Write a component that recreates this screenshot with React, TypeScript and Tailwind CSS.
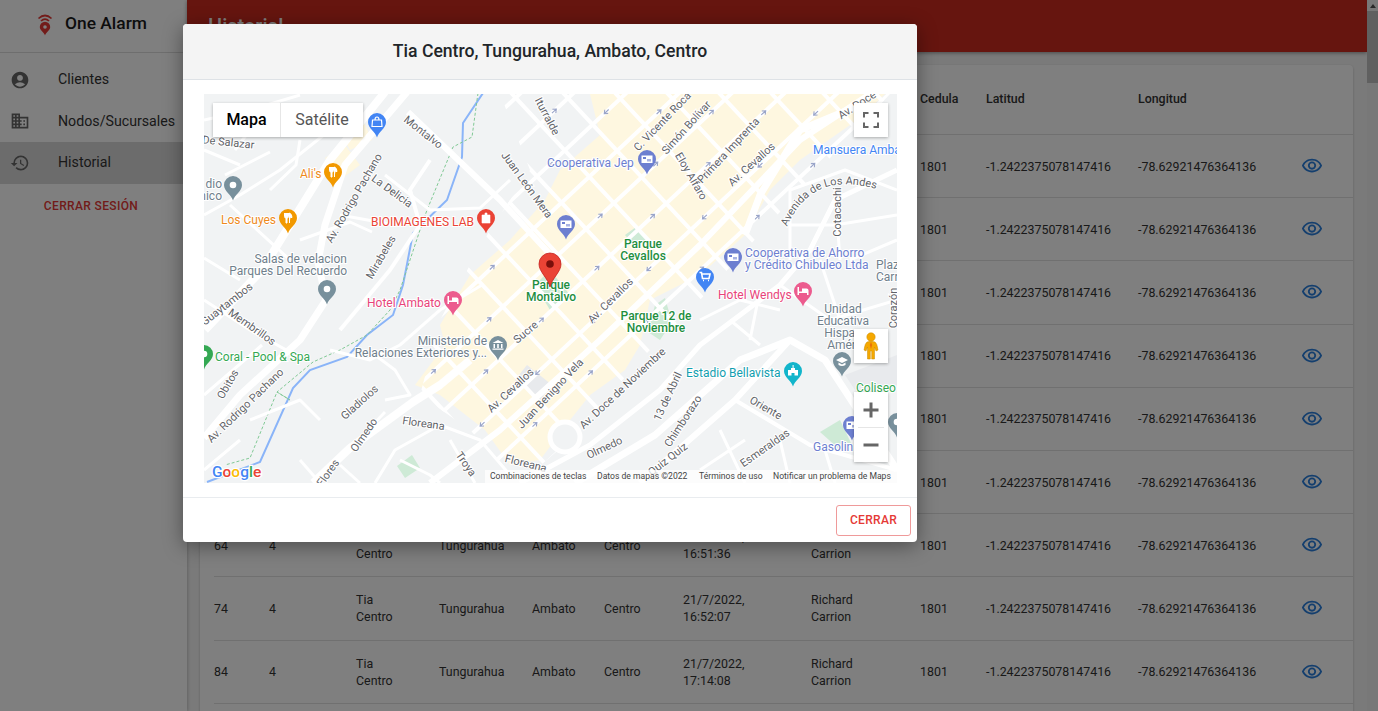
import { MdAccountCircle, MdDomain, MdHistory, MdOutlineVisibility } from "react-icons/md";

const rows = [
  ["4", "11:02:14"],
  ["14", "12:40:51"],
  ["24", "14:18:09"],
  ["34", "15:33:27"],
  ["44", "16:05:42"],
  ["54", "16:30:18"],
  ["64", "16:51:36"],
  ["74", "16:52:07"],
  ["84", "17:14:08"],
  ["94", "17:20:33"],
];

const cols = "grid grid-cols-[55px_87px_83px_93px_72px_79px_128px_109px_66px_152px_163px_1fr] items-center";

const menu = [
  { label: "Clientes", icon: MdAccountCircle, active: false },
  { label: "Nodos/Sucursales", icon: MdDomain, active: false },
  { label: "Historial", icon: MdHistory, active: true },
];

const YELLOW = "590,94 885,94 860,118 800,160 770,190 745,235 700,275 650,300 640,345 625,370 590,395 570,420 540,460 510,465 485,430 440,395 415,385 445,345 440,325 470,275 510,240 545,200 560,170 600,135";
const GRID = "500,94 890,94 800,190 700,300 640,360 570,440 520,483 470,430 420,395 440,320 470,265 490,230 530,170";

const roads: [string, number][] = [
  ["M407 92 L345 165 L325 225 L318 262 L326 300 L300 340 L240 395 L204 438", 7],
  ["M385 92 L330 160 L262 270 L205 330", 8],
  ["M204 395 L262 345 M204 300 L250 330 L290 352", 3],
  ["M204 120 L250 110 L300 95 M225 175 L270 152 M204 215 L240 195 L280 170 L330 130", 3],
  ["M230 205 L290 260 M204 258 L240 280 M300 240 L350 222 L372 232", 3],
  ["M250 130 L235 150 M300 140 L296 165 L270 190 M204 150 L240 165", 3],
  ["M408 112 L500 200 L560 265", 6],
  ["M340 215 L395 225 M385 175 L430 210 L480 208 L510 180", 3],
  ["M430 160 L410 190 L420 225 L390 270 L340 330", 4],
  ["M482 285 L440 310 L400 345 L370 360 L330 350", 3],
  ["M313 483 L350 448 L413 402 L440 385 L470 360", 8],
  ["M385 400 L410 395 L395 370 L375 355 M368 430 L385 412", 3],
  ["M375 483 L395 450 L440 425 L480 440 L510 475", 3],
  ["M340 465 L360 483 M300 460 L320 483 M450 440 L475 483", 3],
  ["M400 460 L430 475 L440 483 M204 470 L240 440 M250 420 L300 400 L320 420", 3],
  ["M520 483 L590 445 L660 390 L700 345 L780 285 L810 250 L835 200 L897 170", 5],
  ["M575 483 L655 435 L740 360 L790 340 L825 360 L897 470", 7],
  ["M640 483 L735 400 L790 340", 6],
  ["M735 400 L810 445 L897 470", 4],
  ["M745 483 L720 430 M790 483 L780 440 M700 470 L745 440 M835 483 L825 450", 3],
  ["M730 320 L760 345 M700 320 L740 300 L780 310 M760 290 L750 340", 3],
  ["M780 285 L830 320 L897 300 M850 260 L897 240 M820 260 L840 320", 3],
  ["M790 260 L790 190 L845 170 L897 190 M835 190 L840 260 M790 225 L835 225 L897 215", 3],
  ["M745 235 L760 195 L800 130 L860 105", 7],
  ["M430 483 L500 430 L600 340 L700 245 L800 140 L870 94", 6],
];

const streets: [string, number, number, number][] = [
  ["De Salazar", 228, 146, 6],
  ["Montalvo", 421, 135, 38],
  ["Iturralde", 544, 118, 62],
  ["Juan León Mera", 524, 187, 54],
  ["C. Vicente Roca", 665, 124, -46],
  ["Simón Bolívar", 689, 130, -48],
  ["Eloy Alfaro", 688, 178, 60],
  ["Primera Imprenta", 731, 153, -47],
  ["Av. Cevallos", 754, 167, -42],
  ["Av. Doce", 859, 108, -33],
  ["Cotacachi", 841, 212, -90],
  ["La Delicia", 390, 194, 36],
  ["Av. Rodrigo Pachano", 357, 200, -60],
  ["Mirabeles", 384, 259, -60],
  ["Guaytambos", 229, 307, -38],
  ["Membrillos", 250, 330, 35],
  ["Obitos", 231, 386, -60],
  ["Av. Rodrigo Pachano", 248, 408, -44],
  ["Gladiolos", 362, 405, -42],
  ["Olmedo", 367, 437, -55],
  ["Flores", 331, 475, -55],
  ["Floreana", 423, 427, 8],
  ["Troya", 463, 466, 55],
  ["Floreana", 525, 467, 14],
  ["Sucre", 528, 335, -40],
  ["Av. Cevallos", 513, 393, -43],
  ["Av. Cevallos", 613, 303, -45],
  ["Juan Benigno Vela", 553, 396, -47],
  ["Av. Doce de Noviembre", 625, 391, -43],
  ["13 de Abril", 671, 398, -65],
  ["Chimborazo", 686, 423, -57],
  ["Olmedo", 606, 451, -25],
  ["Quiz Quiz", 670, 462, -38],
  ["Oriente", 764, 411, 30],
  ["Esmeraldas", 767, 451, -35],
  ["Corazón", 897, 308, -90],
];

const pois: [string, number, number, string, "start" | "middle" | "end"][] = [
  ["Mansuera Amba", 813, 154, "#4285f4", "start"],
  ["Cooperativa Jep", 547, 167, "#6d7fd0", "start"],
  ["BIOIMAGENES LAB", 371, 226, "#ea4335", "start"],
  ["Ali's", 300, 178, "#ee8a1c", "start"],
  ["Los Cuyes", 221, 224, "#ee8a1c", "start"],
  ["Salas de velacion", 347, 263, "#70808c", "end"],
  ["Parques Del Recuerdo", 347, 275, "#70808c", "end"],
  ["dio", 222, 188, "#70808c", "end"],
  ["nico", 222, 200, "#70808c", "end"],
  ["Parque", 643, 248, "#1e8e3e", "middle"],
  ["Cevallos", 643, 260, "#1e8e3e", "middle"],
  ["Parque", 551, 289, "#1e8e3e", "middle"],
  ["Montalvo", 551, 301, "#1e8e3e", "middle"],
  ["Parque 12 de", 656, 320, "#1e8e3e", "middle"],
  ["Noviembre", 656, 332, "#1e8e3e", "middle"],
  ["Cooperativa de Ahorro", 745, 257, "#6d7fd0", "start"],
  ["y Crédito Chibuleo Ltda", 745, 269, "#6d7fd0", "start"],
  ["Plaz", 876, 269, "#70808c", "start"],
  ["Carr", 876, 281, "#70808c", "start"],
  ["Hotel Wendys", 718, 299, "#e8437a", "start"],
  ["Hotel Ambato", 367, 307, "#e8437a", "start"],
  ["Coral - Pool & Spa", 215, 361, "#34a853", "start"],
  ["Ministerio de", 487, 345, "#70808c", "end"],
  ["Relaciones Exteriores y...", 487, 357, "#70808c", "end"],
  ["Unidad", 843, 313, "#70808c", "middle"],
  ["Educativa", 843, 325, "#70808c", "middle"],
  ["Hispan", 843, 337, "#70808c", "middle"],
  ["Améri", 843, 349, "#70808c", "middle"],
  ["Estadio Bellavista", 686, 377, "#129eaf", "start"],
  ["Coliseo", 856, 392, "#34a853", "start"],
  ["Gasolin", 813, 451, "#6d7fd0", "start"],
];

// glyph: f = food, b = bag, c = card, o = dot, h = bed, p = plus, m = museum, s = school, k = stadium, t = cart
const pins: [number, number, string, string][] = [
  [377, 122, "#4285f4", "b"],
  [333, 172, "#f29900", "f"],
  [288, 218, "#f29900", "f"],
  [233, 185, "#78909c", "o"],
  [327, 289, "#78909c", "o"],
  [486, 218, "#ea4335", "p"],
  [647, 159, "#6d7fd0", "c"],
  [566, 224, "#6d7fd0", "c"],
  [733, 257, "#6d7fd0", "c"],
  [705, 277, "#4285f4", "t"],
  [803, 291, "#ec5b8e", "h"],
  [453, 300, "#ec5b8e", "h"],
  [204, 354, "#34a853", "o"],
  [498, 345, "#78909c", "m"],
  [842, 361, "#78909c", "s"],
  [793, 371, "#12b5cb", "k"],
  [852, 425, "#6d7fd0", "c"],
  [897, 422, "#78909c", "o"],
];

function Glyph({ kind }: { kind: string }) {
  if (kind === "f") return <path d="M-3.5 -5 V-1.5 Q-3.5 0 -2 0 V5 H-1 V0 Q0.5 0 0.5 -1.5 V-5 M1.5 5 V-5 Q4 -4 4 -0.5 H2.5" stroke="#fff" strokeWidth="1" fill="#fff" />;
  if (kind === "b") return <path d="M-4.5 -2 H4.5 L5 4.5 H-5 Z M-2 -2 Q-2 -5 0 -5 Q2 -5 2 -2" stroke="#fff" strokeWidth="1.2" fill="none" />;
  if (kind === "c") return <g><rect x="-5.5" y="-3.5" width="11" height="7.5" fill="#fff" /><rect x="-4" y="-2" width="3" height="2" fill="#6d7fd0" /><rect x="0" y="0" width="4" height="2.5" fill="#a9b3e3" /></g>;
  if (kind === "o") return <circle r="3.3" fill="#fff" />;
  if (kind === "h") return <path d="M-5.5 4 V-4 H-4 V0.5 H-1 V-2.5 H3.5 Q5.5 -2.5 5.5 -0.5 V4 H4 V2 H-4 V4 Z" fill="#fff" />;
  if (kind === "p") return <path d="M-4 -3 H4 V5 H-4 Z M-1 -5 H1 V-3 H-1 Z" fill="#fff" stroke="#fff" strokeWidth="0.6" />;
  if (kind === "m") return <path d="M-5.5 -2 L0 -5 L5.5 -2 Z M-4.5 -1 H-3 V3 H-4.5 Z M-0.8 -1 H0.8 V3 H-0.8 Z M3 -1 H4.5 V3 H3 Z M-5.5 3.5 H5.5 V4.7 H-5.5 Z" fill="#fff" />;
  if (kind === "s") return <path d="M-6 -1 L0 -4 L6 -1 L0 2 Z M-3.5 1.5 L0 3.4 L3.5 1.5 V4 Q0 6 -3.5 4 Z" fill="#fff" />;
  if (kind === "k") return <path d="M-5 4.5 V-1 H-2 V-3 H-0.4 V-6 H0.6 V-3 H2 V-1 H5 V4.5 H1.5 V2 H-1.5 V4.5 Z" fill="#fff" />;
  if (kind === "t") return <path d="M-5.5 -4.5 H-3.5 L-2.5 1.5 H4 L5 -3 H-3 M-2 3.5 h1 M3 3.5 h1" stroke="#fff" strokeWidth="1.6" fill="none" />;
  return null;
}

function MapDrawing() {
  const hLines = Array.from({ length: 21 }, (_, i) => -380 + i * 36);
  const vLines = Array.from({ length: 21 }, (_, i) => -388 + i * 38);
  const arrows = hLines.flatMap((y, i) =>
    vLines
      .filter((_, j) => (i + j) % 2 === 0)
      .map((x) => ({ x: x + 19, y, back: i % 4 === 0 }))
  );

  return (
    <svg viewBox="204 94 693 389" className="block h-full w-full font-['Roboto',sans-serif]">
      <defs>
        <clipPath id="grid-area">
          <polygon points={GRID} />
        </clipPath>
      </defs>
      <rect x="204" y="94" width="693" height="389" fill="#f1f3f4" />
      <polygon points={YELLOW} fill="#fef7e0" />
      <polygon points="340,132 362,118 372,140 350,150" fill="#fef7e0" />
      <polygon points="325,158 345,145 360,165 340,180" fill="#fef7e0" />
      <polygon points="527,365 552,385 540,400 515,380" fill="#e8eaed" />
      <polygon points="845,375 897,355 897,385 865,405" fill="#e8eaed" />
      <polygon points="648,332 655,305 665,298 672,322 660,340" fill="#ceead6" />
      <polygon points="535,285 550,270 570,295 550,310" fill="#ceead6" />
      <polygon points="625,235 636,227 647,240 635,247" fill="#ceead6" />
      <polygon points="820,432 840,420 852,445 838,448" fill="#ceead6" />
      <polygon points="397,466 412,455 420,468 405,478" fill="#ceead6" />

      <path d="M483 93 L463 123 L462 157 L447 200 L413 233 L403 285 L393 315 L367 335 L347 357 L310 370 L293 388 L260 462 L207 482" fill="none" stroke="#8ab4f8" strokeWidth="2" />
      <path d="M478 93 L472 137 L453 147 L427 210 L420 230 L400 290 L390 310 L367 335 L340 350 L313 362 L277 392 L290 400 L277 392 L250 458 L225 465" fill="none" stroke="#81c995" strokeWidth="1" strokeDasharray="3 2" />

      <g clipPath="url(#grid-area)">
        <g transform="rotate(-43 550 290)">
          {hLines.map((y) => (
            <line key={`h${y}`} x1="100" x2="1000" y1={290 + y} y2={290 + y} stroke="#fff" strokeWidth="4" />
          ))}
          {vLines.map((x) => (
            <line key={`v${x}`} x1={550 + x} x2={550 + x} y1="-200" y2="800" stroke="#fff" strokeWidth="4" />
          ))}
          {arrows.map((a) => (
            <path
              key={`a${a.x}-${a.y}`}
              transform={`translate(${550 + a.x} ${290 + a.y}) rotate(${a.back ? 180 : 0})`}
              d="M-3 0 H3 M0 -2.5 L3 0 L0 2.5"
              fill="none"
              stroke="#9aa5c9"
              strokeWidth="1.1"
            />
          ))}
        </g>
      </g>

      {roads.map(([d, w]) => (
        <path key={d} d={d} fill="none" stroke="#fff" strokeWidth={w} strokeLinejoin="round" />
      ))}
      <circle cx="565" cy="437" r="15" fill="#f1f3f4" stroke="#fff" strokeWidth="5" />

      {streets.map(([t, x, y, r]) => (
        <text
          key={`${t}${x}`}
          x={x}
          y={y}
          textAnchor="middle"
          transform={`rotate(${r} ${x} ${y})`}
          fontSize="11"
          fill="#5f6368"
          stroke="#fff"
          strokeWidth="2"
          paintOrder="stroke"
        >
          {t}
        </text>
      ))}
      <path id="los-andes" d="M787 227 Q803 190 835 185 Q860 182 892 194" fill="none" />
      <text fontSize="11" fill="#5f6368" stroke="#fff" strokeWidth="2" paintOrder="stroke">
        <textPath href="#los-andes">Avenida de Los Andes</textPath>
      </text>

      {pins.map(([x, y, color, kind]) => (
        <g key={`${x}-${y}`} transform={`translate(${x} ${y})`}>
          <path d="M0 15.5 C-1.5 9.5 -9 6.5 -9 0 a9 9 0 1 1 18 0 C9 6.5 1.5 9.5 0 15.5 Z" fill={color} />
          <Glyph kind={kind} />
        </g>
      ))}

      {pois.map(([t, x, y, c, anchor]) => (
        <text
          key={`${t}${y}`}
          x={x}
          y={y}
          textAnchor={anchor}
          fontSize="12"
          fontWeight={c === "#1e8e3e" ? 500 : 400}
          fill={c}
          stroke="#fff"
          strokeWidth="2"
          paintOrder="stroke"
        >
          {t}
        </text>
      ))}

      <g transform="translate(550 266)">
        <path d="M0 21 C-2 12 -11 6 -11 -2 a11 11 0 1 1 22 0 C11 6 2 12 0 21 Z" fill="#ea4335" stroke="#c5221f" strokeWidth="0.8" />
        <circle cy="-2" r="3.8" fill="#7a0f0b" />
      </g>

      <rect x="485" y="470" width="412" height="13" fill="#fff" fillOpacity="0.75" />
      <g fontSize="8.6" fill="#444">
        <text x="490" y="479">Combinaciones de teclas</text>
        <text x="597" y="479">Datos de mapas ©2022</text>
        <text x="699" y="479">Términos de uso</text>
        <text x="773" y="479">Notificar un problema de Maps</text>
      </g>

      <text x="212" y="477" fontSize="15.5" fontWeight="500" stroke="#fff" strokeWidth="2.5" paintOrder="stroke">
        <tspan fill="#4285f4">G</tspan>
        <tspan fill="#ea4335">o</tspan>
        <tspan fill="#fbbc04">o</tspan>
        <tspan fill="#4285f4">g</tspan>
        <tspan fill="#34a853">l</tspan>
        <tspan fill="#ea4335">e</tspan>
      </text>
    </svg>
  );
}

function MapControls() {
  return (
    <>
      <div className="absolute left-[9px] top-[9px] flex h-[34px] w-[150px] bg-white text-[16px] shadow-[0_1px_3px_rgba(0,0,0,0.3)]">
        <div className="flex w-[68px] items-center justify-center border-r border-[#e6e6e6] font-medium text-black">Mapa</div>
        <div className="flex flex-1 items-center justify-center text-[#565656]">Satélite</div>
      </div>
      <div className="absolute left-[650px] top-[9px] flex h-[34px] w-[34px] items-center justify-center bg-white shadow-[0_1px_3px_rgba(0,0,0,0.3)]">
        <svg width="16" height="16" viewBox="0 0 16 16" fill="none" stroke="#666" strokeWidth="2">
          <path d="M1 5.5 V1 H5.5 M10.5 1 H15 V5.5 M15 10.5 V15 H10.5 M5.5 15 H1 V10.5" />
        </svg>
      </div>
      <div className="absolute left-[650px] top-[235px] flex h-[34px] w-[34px] items-center justify-center bg-white shadow-[0_1px_3px_rgba(0,0,0,0.3)]">
        <svg width="16" height="28" viewBox="0 0 16 28">
          <circle cx="8" cy="5" r="4.2" fill="#f5a800" stroke="#c98a00" strokeWidth="0.5" />
          <path d="M4 10 Q8 8.5 12 10 Q14 11 15 18 L13 19 L11.5 15 V27 H8.7 V19 H7.3 V27 H4.5 V15 L3 19 L1 18 Q2 11 4 10 Z" fill="#f5a800" stroke="#c98a00" strokeWidth="0.5" />
          <path d="M8 9.8 L6.8 13 L8 17 L9.2 13 Z" fill="#e8710a" />
        </svg>
      </div>
      <div className="absolute left-[650px] top-[298px] flex h-[70px] w-[34px] flex-col items-center bg-white shadow-[0_1px_3px_rgba(0,0,0,0.3)]">
        <div className="flex h-[35px] items-center justify-center">
          <svg width="16" height="16" viewBox="0 0 16 16" fill="#666">
            <path d="M6.5 0.5 H9.5 V6.5 H15.5 V9.5 H9.5 V15.5 H6.5 V9.5 H0.5 V6.5 H6.5 Z" />
          </svg>
        </div>
        <div className="h-px w-[26px] bg-[#e6e6e6]" />
        <div className="flex h-[34px] items-center justify-center">
          <svg width="16" height="16" viewBox="0 0 16 16" fill="#666">
            <path d="M0.5 6.5 H15.5 V9.5 H0.5 Z" />
          </svg>
        </div>
      </div>
    </>
  );
}

export default function App() {
  return (
    <div className="relative flex h-[711px] w-full overflow-hidden bg-[#f5f5f5] font-['Roboto',sans-serif] text-[12.4px] text-[#333]">
      <aside className="w-[187px] shrink-0 bg-white shadow-[1px_0_3px_rgba(0,0,0,0.2)]">
        <div className="flex h-[53px] items-center border-b border-[#dcdcdc] pb-[5px] pl-[36px]">
          <svg width="18" height="24" viewBox="0 0 18 24" fill="none" className="mr-[11px]">
            <path d="M2.5 6.5 Q9 0.5 15.5 6.5 M5 9 Q9 5 13 9" stroke="#e53935" strokeWidth="1.7" />
            <path d="M9 23.5 C8 20 3.8 18.5 3.8 15 a5.2 5.2 0 1 1 10.4 0 C14.2 18.5 10 20 9 23.5 Z" fill="#e53935" />
            <circle cx="9" cy="15" r="1.8" fill="#fff" />
          </svg>
          <span className="text-[17.4px] font-medium text-[#1a1a1a]">One Alarm</span>
        </div>
        <nav className="pt-[6px]">
          {menu.map((item) => (
            <div
              key={item.label}
              className={`flex h-[41.6px] items-center pl-[10px] text-[14.2px] text-[#333] ${item.active ? "bg-black/15" : ""}`}
            >
              <item.icon className="h-[20px] w-[20px] text-[#666]" />
              <span className="ml-[28px]">{item.label}</span>
            </div>
          ))}
        </nav>
        <div className="mt-[13px] pr-[5px] text-center text-[12px] font-medium tracking-[0.35px] text-[#e53935]">CERRAR SESIÓN</div>
      </aside>

      <div className="flex min-w-0 flex-1 flex-col">
        <header className="flex h-[52px] shrink-0 items-center bg-[#cc2a1e] pl-[21px] shadow-[0_1px_4px_rgba(0,0,0,0.4)]">
          <h1 className="text-[20px] font-medium text-white">Historial</h1>
        </header>
        <main className="flex-1 pl-[13px] pr-[14px] pt-[13px]">
          <div className="rounded-[4px] bg-white pl-[14px] shadow-[0_1px_3px_rgba(0,0,0,0.2)]">
            <div className={`${cols} h-[70px] border-b border-[#e0e0e0] font-medium`}>
              <span>ID</span>
              <span>Nodo</span>
              <span>Nombre</span>
              <span>Provincia</span>
              <span>Ciudad</span>
              <span>Sector</span>
              <span>Fecha</span>
              <span>Usuario</span>
              <span>Cedula</span>
              <span>Latitud</span>
              <span>Longitud</span>
              <span />
            </div>
            {rows.map(([id, time]) => (
              <div key={id} className={`${cols} h-[63.2px] border-b border-[#e0e0e0] leading-[17px]`}>
                <span>{id}</span>
                <span>4</span>
                <span>
                  Tia
                  <br />
                  Centro
                </span>
                <span>Tungurahua</span>
                <span>Ambato</span>
                <span>Centro</span>
                <span>
                  21/7/2022,
                  <br />
                  {time}
                </span>
                <span>
                  Richard
                  <br />
                  Carrion
                </span>
                <span>1801</span>
                <span>-1.2422375078147416</span>
                <span>-78.62921476364136</span>
                <MdOutlineVisibility className="h-[22px] w-[22px] text-[#2a7fdc]" />
              </div>
            ))}
          </div>
        </main>
      </div>

      <div className="flex w-[11px] shrink-0 flex-col items-center bg-[#f1f1f1]">
        <div className="flex h-[11px] items-center justify-center">
          <div className="h-0 w-0 border-x-[3px] border-b-[4px] border-x-transparent border-b-[#505050]" />
        </div>
        <div className="h-[72px] w-full bg-[#c1c1c1]" />
      </div>

      <div className="absolute inset-0 bg-black/50" />

      <div className="absolute left-[183px] top-[24px] flex h-[518px] w-[734px] flex-col rounded-[4px] bg-white shadow-[0_4px_20px_rgba(0,0,0,0.4)]">
        <div className="flex h-[56px] shrink-0 items-center justify-center rounded-t-[4px] border-b border-[#dee2e6] bg-[#f4f4f4] text-[17.6px] font-medium text-[#212529]">
          Tia Centro, Tungurahua, Ambato, Centro
        </div>
        <div className="h-[417px] shrink-0 pl-[21px] pt-[14px]">
          <div className="relative h-[389px] w-[693px] overflow-hidden">
            <MapDrawing />
            <MapControls />
          </div>
        </div>
        <div className="flex flex-1 items-center justify-end border-t border-[#e9ecef] pr-[6px]">
          <div className="flex h-[31px] w-[75px] items-center justify-center rounded-[3px] border border-[#ef9a9a] text-[12px] font-medium tracking-[0.3px] text-[#e53935]">
            CERRAR
          </div>
        </div>
      </div>
    </div>
  );
}
